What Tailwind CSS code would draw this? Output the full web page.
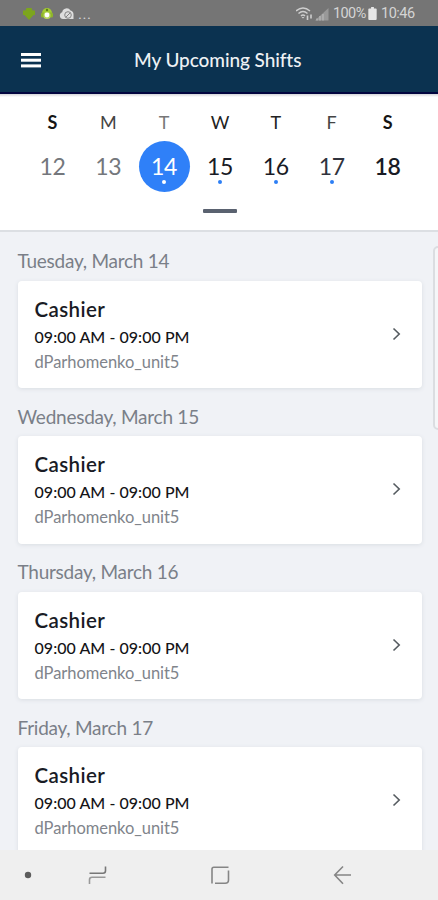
<!DOCTYPE html>
<html lang="en">
<head>
<meta charset="utf-8">
<title>My Upcoming Shifts</title>
<script src="https://cdn.jsdelivr.net/npm/@tailwindcss/browser@4"></script>
</head>
<body class="w-[438px] h-[900px] overflow-hidden flex flex-col bg-[#f0f2f6] font-['Lato',sans-serif]">
<div class="h-[26px] shrink-0 bg-[#757575] flex items-center justify-between pl-[22px] pr-[23px] pt-[2px] font-['Roboto',sans-serif] text-[#d4d4d4]">
  <div class="flex items-center">
    <svg class="w-[14px] h-[14px]" viewBox="0 0 14 14" fill="#7ca51d"><path d="M4.500 1h5l1 2.500H13v4.500h-1.500L7 13 2.500 8H1V3.500h2.500z"/></svg>
    <svg class="w-[14px] h-[14px] ml-[4px]" viewBox="0 0 14 14"><path d="M2 6a5 5 0 0 1 10 0z" fill="#a4cb33"/><rect x="1" y="5.500" width="12" height="5" rx="1.500" fill="#8fb52a"/><rect x="3.500" y="5" width="7" height="7" rx="3" fill="#b8d65c"/><circle cx="7" cy="8" r="2.400" fill="#fff"/><circle cx="7" cy="3" r="1.200" fill="#5f7d18"/></svg>
    <svg class="w-[16px] h-[14px] ml-[5px]" viewBox="0 0 16 14"><path d="M4 12a3.500 3.500 0 0 1-.8-6.800A4.500 4.500 0 0 1 11.500 3.500a4 4 0 0 1 3 4V12z" fill="#dedede"/><circle cx="9" cy="8" r="3.300" fill="none" stroke="#858585"/><path d="M7 10l4-4" stroke="#858585"/></svg>
    <span class="text-[15px] leading-[14px] ml-[3px] tracking-[0.500px]">...</span>
  </div>
  <div class="flex items-center">
    <svg class="w-[18px] h-[14px]" viewBox="0 0 18 14" fill="none" stroke="#cfcfcf" stroke-width="1.500"><path d="M0 4q7-6 14 0M2.500 6.500q4.500-4 9 0M5 9q2-2 4 0"/><path d="M7 11.500L5.500 10h3z" fill="#cfcfcf" stroke="none"/><path d="M11.500 8.500v4.500M15 7.500v4" stroke-width="1.600"/></svg>
    <svg class="w-[14px] h-[13px] ml-[1px]" viewBox="0 0 14 13"><path d="M0 12.500L13.500 0v12.500z" fill="#999"/><path d="M2 10.500v2M5 8v4.500M8 6v6.500" stroke="#b3b3b3" stroke-width="1.500"/></svg>
    <span class="text-[14.500px] leading-[18px] ml-[4px] w-[33px] tracking-[-0.600px]">100%</span>
    <svg class="w-[9px] h-[13px] mb-[1px] ml-[2px]" viewBox="0 0 9 14"><path d="M3 0h3v1.500h2q1 0 1 1V13q0 1-1 1H1q-1 0-1-1V2.500q0-1 1-1h2z" fill="#e6e6e6"/></svg>
    <span class="text-[14.500px] leading-[18px] ml-[4px] w-[34px] tracking-[-0.500px]">10:46</span>
  </div>
</div>

<header class="h-[68px] shrink-0 bg-[#0b3250] border-b-2 border-[#02053f] flex items-center">
  <svg class="ml-[21px] w-[20px] h-[15px] mt-[2px]" viewBox="0 0 20 15" fill="#fff"><rect width="20" height="3"/><rect y="5.700" width="20" height="3"/><rect y="11.400" width="20" height="3"/></svg>
  <h1 class="ml-[93px] mt-[2px] text-[19px] leading-[24px] font-medium tracking-[-0.080px] text-[#eef1f4] whitespace-nowrap">My Upcoming Shifts</h1>
</header>

<section class="h-[138px] shrink-0 bg-white border-b-2 border-[#dcdfe3] flex flex-col items-center">
  <div class="w-full h-[3px] bg-linear-to-b from-[#d3d4d8] to-white"></div>
  <div id="week" class="grid grid-cols-7 w-[391px] mt-[14px] ml-[2px]"></div>
  <div class="w-[34px] h-[4px] mt-[17px] ml-[1px] bg-[#5a6270] rounded-[1px]"></div>
</section>

<main id="list" class="flex-1 min-h-0 overflow-hidden pl-[17.5px] pr-[16px] pt-[17px]"></main>
<div class="absolute left-[433px] top-[246px] w-[12px] h-[184px] rounded-[5px] border-2 border-[#dbdde1] bg-[#f5f6f8]"></div>

<nav class="h-[50px] shrink-0 bg-[#efefef] flex items-center">
  <svg class="w-[438px] h-[50px]" viewBox="0 850 438 50" fill="none" stroke="#858585" stroke-width="1.600">
    <circle cx="28" cy="875" r="3.200" fill="#5c5c5c" stroke="none"/>
    <path d="M89.500 873.300H103q2.500 0 2.500-2.500V866.500" stroke="#777"/>
    <path d="M105.500 877.300H92q-2.500 0-2.500 2.500V884" stroke="#999"/>
    <path d="M212 883.500V869q0-1.800 1.800-1.800H228.500M228.500 870.500V880q0 3.300-3.300 3.300H215"/>
    <path d="M351 875H335M343 866.500L334.700 875L343 883.700"/>
  </svg>
</nav>

<script>
const days = [
  ["S", "12", "font-bold text-[#151515]", "text-[#74777c]", ""],
  ["M", "13", "text-[#444]", "text-[#74777c]", ""],
  ["T", "14", "text-[#777]", "text-white", "bg-white"],
  ["W", "15", "text-[#222]", "text-[#191b25]", "bg-[#2d7ff5]"],
  ["T", "16", "text-[#222]", "text-[#191b25]", "bg-[#2d7ff5]"],
  ["F", "17", "text-[#444]", "text-[#30333d]", "bg-[#2d7ff5]"],
  ["S", "18", "font-bold text-[#151515]", "text-[#191b25] font-semibold", ""]
];
document.getElementById("week").innerHTML = days.map(([d, n, dc, nc, dot]) => `
  <div class="flex flex-col items-center">
    <span class="text-[18px] leading-[22px] ${dc}">${d}</span>
    <div class="w-[51px] h-[51px] mt-[8px] rounded-full flex flex-col items-center ${n === "14" ? "bg-[#2f80f8]" : ""}">
      <span class="text-[23px] leading-[28px] mt-[11px] tracking-[-0.300px] ${nc}">${n}</span>
      <i class="w-[4px] h-[4px] rounded-full ${dot}"></i>
    </div>
  </div>`).join("");
document.getElementById("list").innerHTML = ["Tuesday, March 14", "Wednesday, March 15", "Thursday, March 16", "Friday, March 17"].map(t => `
  <section class="h-[155.5px]">
    <h2 class="text-[19px] leading-[24px] tracking-[-0.250px] text-[#7a7f88]">${t}</h2>
    <article class="mt-[7.5px] h-[107.5px] rounded-[4px] bg-white shadow-[0_1px_4px_#d9dde3] pl-[17px] pr-[21px] flex items-center justify-between">
      <div class="whitespace-nowrap">
        <h3 class="text-[20.500px] leading-[28px] font-semibold tracking-[0.400px] text-[#191b25]">Cashier</h3>
        <p class="text-[16px] leading-[27px] font-medium tracking-[0.040px] text-[#151518]">09:00 AM - 09:00 PM</p>
        <p class="text-[16.500px] leading-[24px] tracking-[-0.050px] text-[#80848b]">dParhomenko_unit5</p>
      </div>
      <svg class="w-[9px] h-[14px] mb-[1px]" viewBox="0 0 9 14" fill="none" stroke="#555b60" stroke-width="1.600"><path d="M1.500 1.500L7.200 7L1.500 12.500"/></svg>
    </article>
  </section>`).join("");
</script>
</body>
</html>
